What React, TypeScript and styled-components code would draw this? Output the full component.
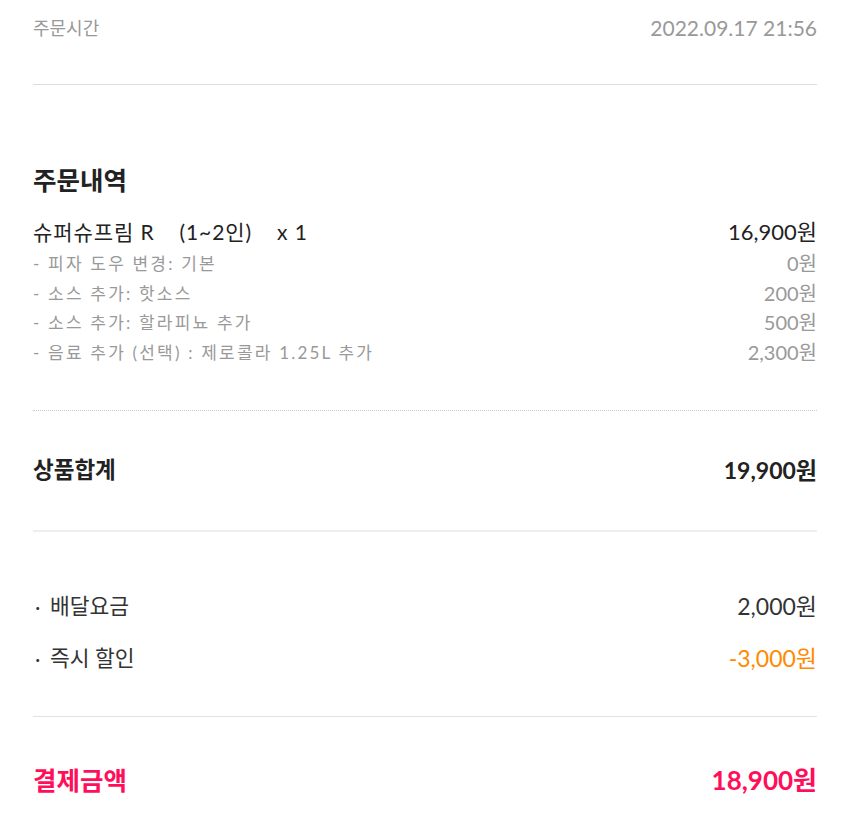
import * as React from 'react'
import styled, { createGlobalStyle } from 'styled-components'

const GlobalStyle = createGlobalStyle`
    body {
        margin: 0;
        background: #fff;
        font-family: "Lato", "Noto Sans CJK KR", "Noto Sans", sans-serif;
    }
`

const Page = styled.div`
    padding: 0 33px;
    color: #222;
`

const Section = styled.section<{ top: number; bottom: number; border?: string }>`
    padding: ${p => p.top}px 0 ${p => p.bottom}px;
    border-bottom: ${p => p.border || 'none'};
`

const Row = styled.div<{ size: number; height: number; color?: string; bold?: boolean }>`
    display: flex;
    justify-content: space-between;
    align-items: center;
    height: ${p => p.height}px;
    font-size: ${p => p.size}px;
    line-height: ${p => p.height}px;
    color: ${p => p.color || '#222'};
    font-weight: ${p => (p.bold ? 700 : 400)};
`

const Label = styled.span`
    white-space: pre;
`

const Amount = styled.span<{ size: number; color?: string }>`
    font-size: ${p => p.size}px;
    letter-spacing: 0;
    color: ${p => p.color || 'inherit'};
`

const Title = styled.h2`
    margin: 0 0 20px;
    font-size: 25.5px;
    line-height: 34px;
    font-weight: 700;
    color: #222;
`

const ItemName = styled(Label)`
    letter-spacing: 0.9px;
`

const Options = styled.div`
    margin-top: 2px;
`

const Option = styled(Row)`
    letter-spacing: 2.2px;
`

const FeeList = styled.div`
    display: flex;
    flex-direction: column;
    gap: 22px;
`

const Bullet = styled.span`
    display: inline-block;
    width: 17px;
    font-family: "Noto Sans CJK KR", sans-serif;
    font-size: 16px;
    font-weight: 700;
    color: #333;
`

const options = [
    { name: '- 피자 도우 변경: 기본', price: '0원' },
    { name: '- 소스 추가: 핫소스', price: '200원' },
    { name: '- 소스 추가: 할라피뇨 추가', price: '500원' },
    { name: '- 음료 추가 (선택) : 제로콜라 1.25L 추가', price: '2,300원' },
]

const App: React.FC = (): JSX.Element => {
    return (
        <Page>
            <GlobalStyle />
            <Section top={16} bottom={44} border="1px solid #ddd">
                <Row size={18} height={24} color="#999">
                    <Label>주문시간</Label>
                    <Amount size={21}>2022.09.17 21:56</Amount>
                </Row>
            </Section>

            <Section top={78} bottom={43} border="1px dotted #ccc">
                <Title>주문내역</Title>
                <Row size={21} height={30}>
                    <ItemName>{'슈퍼슈프림 R    (1~2인)    x 1'}</ItemName>
                    <Amount size={22}>16,900원</Amount>
                </Row>
                <Options>
                    {options.map(o => (
                        <Option key={o.name} size={17} height={29.5} color="#999">
                            <Label>{o.name}</Label>
                            <Amount size={20}>{o.price}</Amount>
                        </Option>
                    ))}
                </Options>
            </Section>

            <Section top={44} bottom={45} border="2px solid #eee">
                <Row size={22.5} height={30} bold>
                    <Label>상품합계</Label>
                    <Amount size={23}>19,900원</Amount>
                </Row>
            </Section>

            <Section top={59} bottom={43} border="1px solid #e2e2e2">
                <FeeList>
                    <Row size={21.5} height={30} color="#333">
                        <Label><Bullet>·</Bullet>배달요금</Label>
                        <Amount size={23}>2,000원</Amount>
                    </Row>
                    <Row size={21.5} height={30} color="#333">
                        <Label><Bullet>·</Bullet>즉시 할인</Label>
                        <Amount size={23} color="#ff8a00">-3,000원</Amount>
                    </Row>
                </FeeList>
            </Section>

            <Section top={46} bottom={30}>
                <Row size={25.5} height={34} color="#ff0f5a" bold>
                    <Label>결제금액</Label>
                    <Amount size={26}>18,900원</Amount>
                </Row>
            </Section>
        </Page>
    )
}

export default App
